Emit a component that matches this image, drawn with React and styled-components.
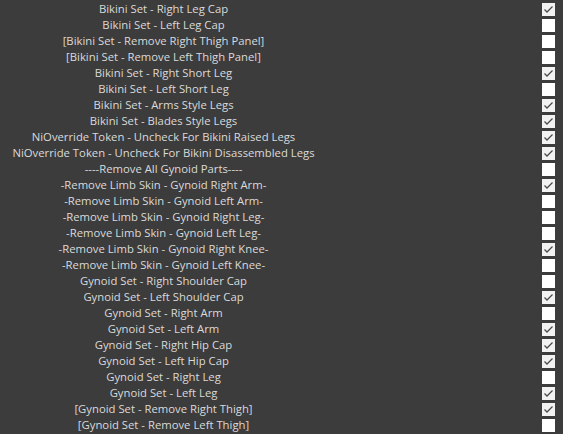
import React, { useState } from "react";
import styled, { createGlobalStyle } from "styled-components";

const GlobalStyle = createGlobalStyle`
  html, body {
    margin: 0;
    padding: 0;
    background: #3c3c3c;
  }
`;

const options = [
  ["Bikini Set - Right Leg Cap", true],
  ["Bikini Set - Left Leg Cap", false],
  ["[Bikini Set - Remove Right Thigh Panel]", false],
  ["[Bikini Set - Remove Left Thigh Panel]", false],
  ["Bikini Set - Right Short Leg", true],
  ["Bikini Set - Left Short Leg", false],
  ["Bikini Set - Arms Style Legs", true],
  ["Bikini Set - Blades Style Legs", true],
  ["NiOverride Token - Uncheck For Bikini Raised Legs", true],
  ["NiOverride Token - Uncheck For Bikini Disassembled Legs", true],
  ["----Remove All Gynoid Parts----", false],
  ["-Remove Limb Skin - Gynoid Right Arm-", true],
  ["-Remove Limb Skin - Gynoid Left Arm-", false],
  ["-Remove Limb Skin - Gynoid Right Leg-", false],
  ["-Remove Limb Skin - Gynoid Left Leg-", false],
  ["-Remove Limb Skin - Gynoid Right Knee-", true],
  ["-Remove Limb Skin - Gynoid Left Knee-", false],
  ["Gynoid Set - Right Shoulder Cap", false],
  ["Gynoid Set - Left Shoulder Cap", true],
  ["Gynoid Set - Right Arm", false],
  ["Gynoid Set - Left Arm", true],
  ["Gynoid Set - Right Hip Cap", true],
  ["Gynoid Set - Left Hip Cap", true],
  ["Gynoid Set - Right Leg", false],
  ["Gynoid Set - Left Leg", true],
  ["[Gynoid Set - Remove Right Thigh]", true],
  ["[Gynoid Set - Remove Left Thigh]", false],
];

const Checkbox = ({ checked, onToggle }) => (
  <Box onClick={onToggle} $checked={checked}>
    {checked && (
      <svg width="13" height="13" viewBox="0 0 13 13">
        <path d="M2.5 6.5 L5 9 L10.5 3.5" fill="none" stroke="#4a4a4a" strokeWidth="1.3" />
      </svg>
    )}
  </Box>
);

const App = () => {
  const [state, setState] = useState(options.map((o) => o[1]));

  const toggle = (i) => {
    const next = [...state];
    next[i] = !next[i];
    setState(next);
  };

  return (
    <>
      <GlobalStyle />
      <List>
        {options.map(([label], i) => (
          <Row key={label}>
            <Label>{label}</Label>
            <Checkbox checked={state[i]} onToggle={() => toggle(i)} />
          </Row>
        ))}
      </List>
    </>
  );
};

const List = styled.div`
  width: 563px;
  padding-top: 1px;
  font-family: "Open Sans", "Noto Sans", sans-serif;
  font-size: 11.3px;
  color: #dadada;
`;

const Row = styled.div`
  display: flex;
  align-items: center;
  height: 16px;
`;

const Label = styled.div`
  width: 327px;
  text-align: center;
  white-space: nowrap;
  line-height: 16px;
`;

const Box = styled.div`
  width: 13px;
  height: 13px;
  margin-left: auto;
  margin-right: 8px;
  background: ${(p) => (p.$checked ? "#f2f2f2" : "#ffffff")};
  cursor: pointer;
  svg {
    display: block;
  }
`;

export default App;
